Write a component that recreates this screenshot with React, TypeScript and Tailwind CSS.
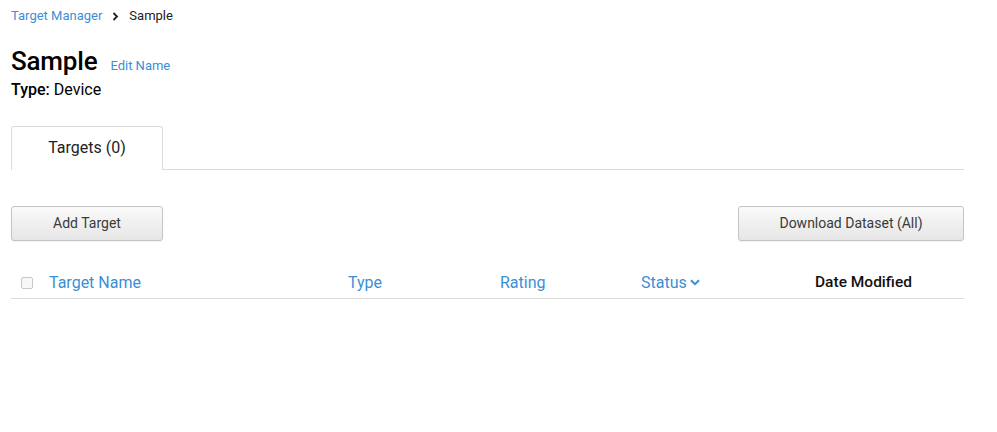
import React from "react";

export default function App() {
  return (
    <div className="min-h-[432px] w-[997px] bg-white text-black" style={{ fontFamily: "Roboto, 'Noto Sans', sans-serif" }}>
      <div className="w-[953px] ml-[11px]">
        <div className="flex items-center pt-[8px] h-[24px] text-[13px] leading-[16px]">
          <a className="text-[#3a8fd6]">Target Manager</a>
          <svg className="mx-[10px]" width="7" height="9" viewBox="0 0 7 9"><path d="M1.5 1 L5 4.5 L1.5 8" stroke="#222" strokeWidth="1.8" fill="none" /></svg>
          <span className="text-[#222]">Sample</span>
        </div>
        <div className="flex items-baseline mt-[20px] h-[34px]">
          <h1 className="text-[26px] leading-[34px] font-medium tracking-[-0.2px]">Sample</h1>
          <a className="ml-[13px] text-[13px] text-[#3a8fd6]">Edit Name</a>
        </div>
        <div className="text-[16px] leading-[20px] mt-[2px]">
          <span className="font-medium">Type:</span> Device
        </div>
        <div className="flex mt-[26px] border-b border-[#dcdcdc]">
          <div className="w-[152px] h-[44px] border border-[#dcdcdc] border-b-0 rounded-t-[3px] bg-white flex items-center justify-center text-[16px] text-[#222] mb-[-1px] pb-[2px]">
            Targets (0)
          </div>
        </div>
        <div className="flex justify-between mt-[36px]">
          <button className="w-[152px] h-[35px] rounded-[3px] border border-[#c4c4c4] bg-gradient-to-b from-[#fafafa] to-[#e6e6e6] text-[14px] text-[#3a3a3a] shadow-[0_1px_1px_rgba(0,0,0,0.06)]">
            Add Target
          </button>
          <button className="w-[226px] h-[35px] rounded-[3px] border border-[#c4c4c4] bg-gradient-to-b from-[#fafafa] to-[#e6e6e6] text-[14px] text-[#3a3a3a] shadow-[0_1px_1px_rgba(0,0,0,0.06)]">
            Download Dataset (All)
          </button>
        </div>
        <div className="flex items-center mt-[25px] h-[33px] border-b border-[#dcdcdc] text-[16px] pt-[1px]">
          <div className="w-[38px] flex items-center pl-[10px]">
            <span className="block w-[12px] h-[12px] border border-[#c8c8c8] rounded-[2px] bg-[#f7f7f7]" />
          </div>
          <div className="w-[299px] text-[#3a8fd6]">Target Name</div>
          <div className="w-[152px] text-[#3a8fd6]">Type</div>
          <div className="w-[141px] text-[#3a8fd6]">Rating</div>
          <div className="w-[174px] text-[#3a8fd6] flex items-center">
            Status
            <svg className="ml-[3px]" width="10" height="7" viewBox="0 0 10 7"><path d="M1 1.2 L5 5.2 L9 1.2" stroke="#3a8fd6" strokeWidth="2" fill="none" /></svg>
          </div>
          <div className="font-medium text-[15.5px] text-[#111]">Date Modified</div>
        </div>
      </div>
    </div>
  );
}
